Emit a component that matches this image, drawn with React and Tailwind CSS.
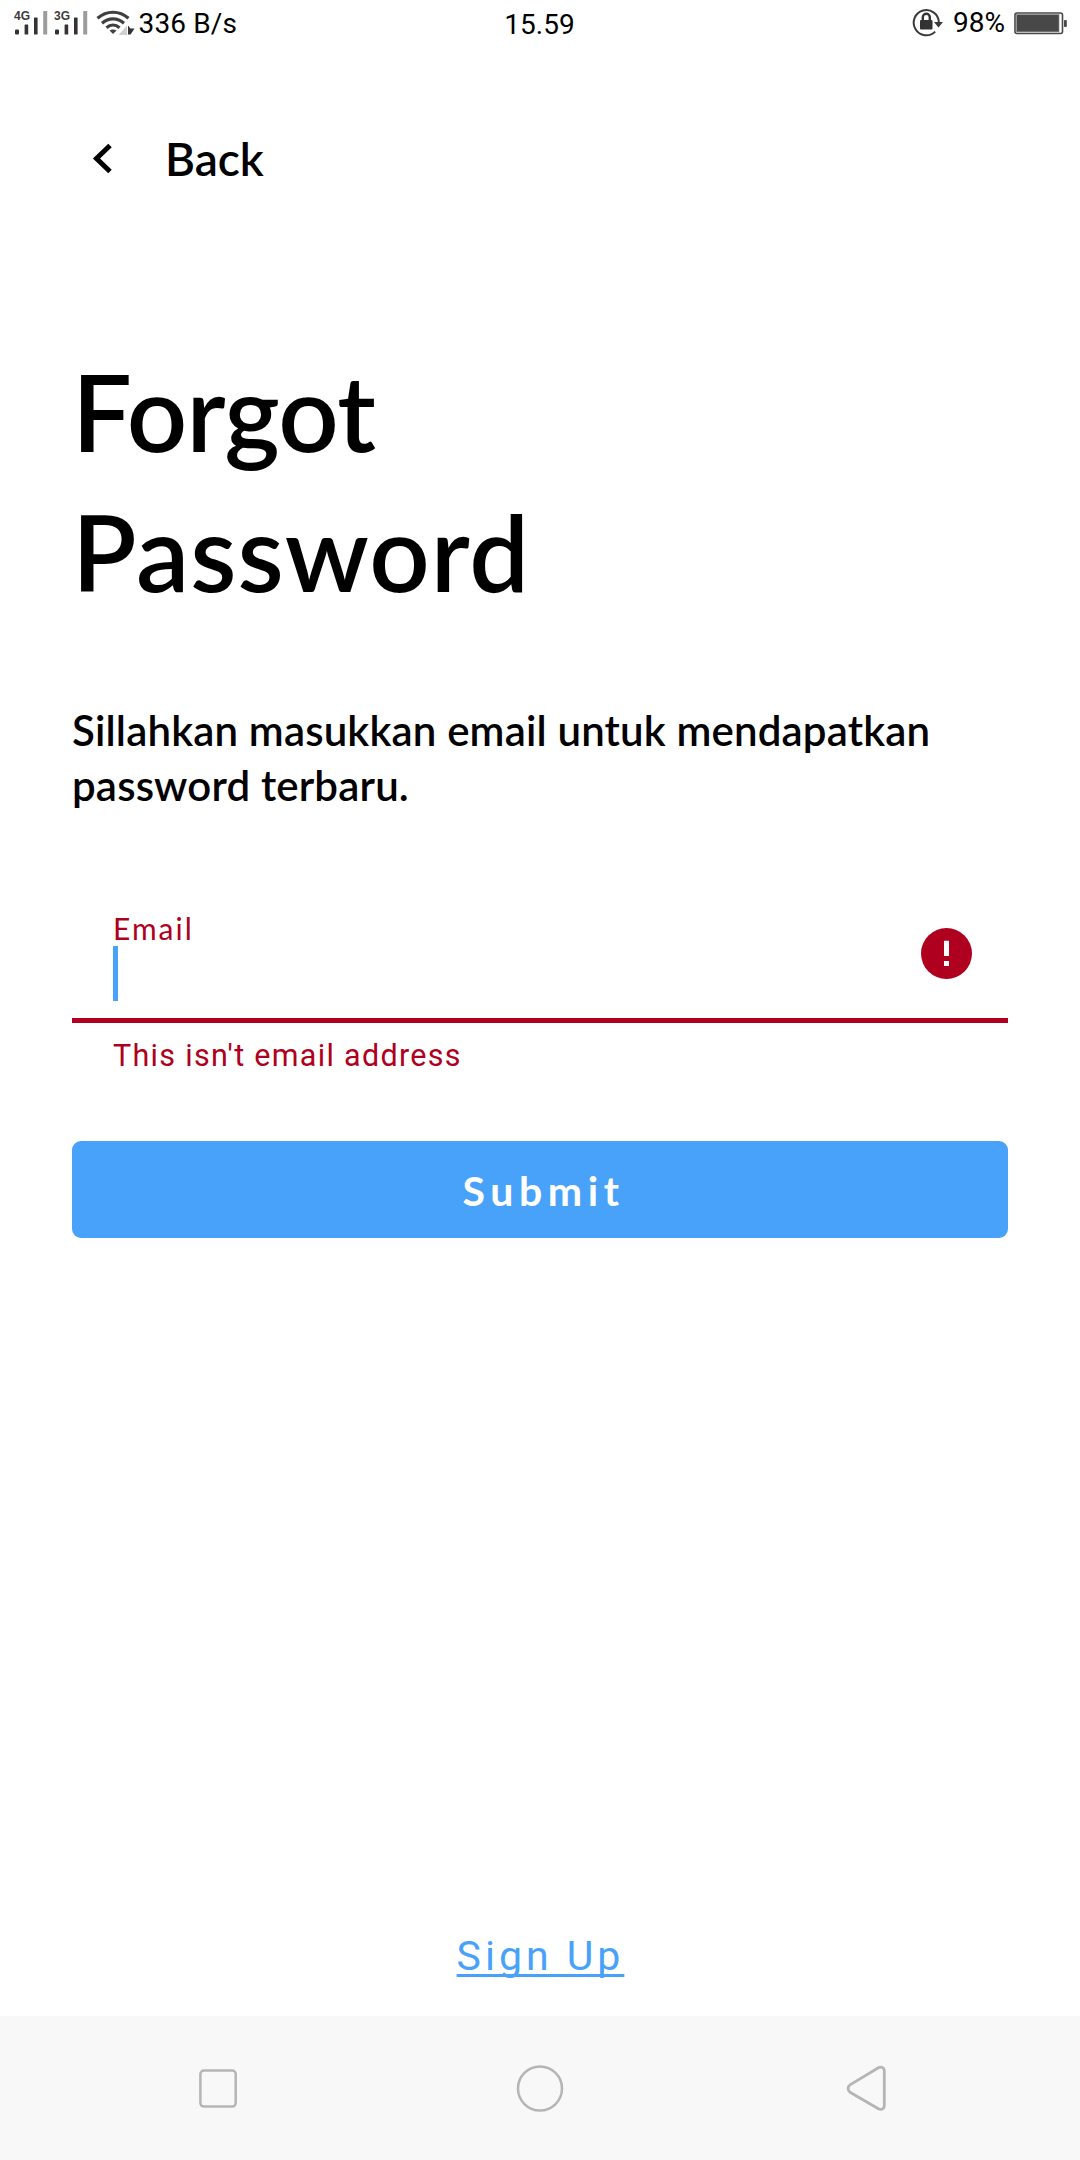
import React from "react";

function Signal({ label }) {
  return (
    <svg className="h-[26px] w-[36px] shrink-0" viewBox="0 0 36 26">
      <text x="0" y="9.5" fontFamily="Liberation Sans, sans-serif" fontSize="12" fontWeight="700" fill="#3b3b3b">{label}</text>
      <rect x="1" y="19.5" width="4" height="5" rx="1" fill="#333" />
      <rect x="10.6" y="14.5" width="3.6" height="10" rx="0.6" fill="#333" />
      <rect x="20" y="7.5" width="3.6" height="17" rx="0.6" fill="#333" />
      <rect x="29.2" y="1" width="4" height="23.5" rx="0.6" fill="#9c9c9c" />
    </svg>
  );
}

function Wifi() {
  return (
    <svg className="h-[26px] w-[40px] shrink-0" viewBox="0 0 40 26">
      <g fill="none" stroke="#404040" strokeWidth="3.2">
        <path d="M1.5 8.3C10.5 0.2 23.5 0.2 32.5 8.3" />
        <path d="M6 13.2C12.5 7.4 21.5 7.4 28 13.2" />
        <path d="M10.5 17.8C14.5 14.2 19.5 14.2 23.5 17.8" />
      </g>
      <path d="M13.5 20.5C15.5 19 18.5 19 20.5 20.5L17 24Z" fill="#404040" />
      <path d="M31 15.5V25H22.5Z" fill="#d0d0d0" />
      <path d="M32 15.5L34.5 18.5H38.5L34.5 24.5H32Z" fill="#333" />
    </svg>
  );
}

function RotationLock() {
  return (
    <svg className="h-[30px] w-[32px] shrink-0" viewBox="0 0 32 30">
      <path d="M23.2 23.6A12.6 12.6 0 1 1 26.9 14.5" fill="none" stroke="#3a3a3a" strokeWidth="2" />
      <path d="M22 14H31L26.5 19.5Z" fill="#3a3a3a" />
      <rect x="8" y="12" width="12.5" height="9.5" rx="1" fill="#333" />
      <path d="M10.8 12.5V9.2A3.5 3.5 0 0 1 17.8 9.2V12.5" fill="none" stroke="#333" strokeWidth="2.4" />
    </svg>
  );
}

function Battery() {
  return (
    <svg className="h-[23px] w-[54px] shrink-0" viewBox="0 0 54 23">
      <rect x="1" y="1" width="47.5" height="20.5" rx="2" fill="#fff" stroke="#484848" strokeWidth="1.6" />
      <rect x="2.6" y="2.6" width="42.4" height="17.3" fill="#484848" stroke="#8a8a8a" strokeWidth="0.7" />
      <rect x="50" y="8" width="2.8" height="7" rx="0.8" fill="#484848" />
    </svg>
  );
}

function StatusBar() {
  return (
    <div className="grid h-12 grid-cols-3 items-start font-[Roboto,sans-serif] text-[28px] leading-8 text-black">
      <div className="flex items-start pl-[14px]">
        <div className="mt-[10px] flex">
          <Signal label="4G" />
          <span className="w-[4px]" />
          <Signal label="3G" />
          <span className="w-[5.5px]" />
          <Wifi />
        </div>
        <span className="mt-[8px] ml-[3px] tracking-[0.15px] whitespace-nowrap">336 B/s</span>
      </div>
      <div className="mt-[9px] pr-px text-center">15.59</div>
      <div className="flex justify-end pr-[12px]">
        <div className="mt-[8px]"><RotationLock /></div>
        <span className="mt-[7px] mr-[9px] ml-[9px]">98%</span>
        <div className="mt-[12px]"><Battery /></div>
      </div>
    </div>
  );
}

function NavBar() {
  return (
    <nav className="flex h-36 items-center justify-between bg-[#f8f8f8] pr-[190px] pl-[194px]">
      <svg className="h-12 w-12" viewBox="0 0 48 48" fill="none" stroke="#b5b5b5" strokeWidth="2.5">
        <rect x="6.4" y="6.6" width="35.3" height="36" rx="3.5" />
      </svg>
      <svg className="h-12 w-12 overflow-visible" viewBox="0 0 48 48" fill="none" stroke="#b5b5b5" strokeWidth="2.5">
        <circle cx="22" cy="24.5" r="22" />
      </svg>
      <svg className="h-12 w-12" viewBox="0 0 48 48" fill="none" stroke="#b5b5b5" strokeWidth="2.8" strokeLinejoin="round">
        <path d="M36.4 3.7C39 2.2 42.3 3.5 42.3 7V41.5C42.3 45 39 46.2 36.4 44.8L8 28.2C5.5 26.6 5.5 22.5 8 20.9Z" />
      </svg>
    </nav>
  );
}

export default function App() {
  return (
    <div className="flex h-[2160px] w-[1080px] flex-col bg-white font-[Lato,sans-serif] text-black">
      <StatusBar />
      <header className="mt-[81px] flex h-[60px] items-center pl-[72px]">
        <svg className="ml-[20px] h-[34px] w-[22px]" viewBox="0 0 22 34">
          <path d="M18 3.5L4.5 16.5L18 29.5" fill="none" stroke="#000" strokeWidth="5" />
        </svg>
        <span className="ml-[51px] text-[46px] leading-[60px] font-semibold">Back</span>
      </header>
      <main className="flex flex-1 flex-col px-[72px]">
        <h1 className="mt-[152px] text-[106px] leading-[140px] font-semibold">
          <span className="block tracking-[-0.6px]">Forgot</span>
          <span className="block tracking-[1px]">Password</span>
        </h1>
        <p className="mt-[82px] text-[42px] leading-[55px] font-semibold tracking-[0.16px] whitespace-nowrap">
          Sillahkan masukkan email untuk mendapatkan<br />password terbaru.
        </p>
        <div className="mt-[87px] flex h-[123px] items-start justify-between border-b-[5px] border-[#b00020] pr-9 pl-[41px]">
          <div className="mt-[10px]">
            <div className="text-[30px] leading-9 tracking-[2px] text-[#b00020]">Email</div>
            <div className="h-[55px] w-[5px] bg-[#48a2fa]" />
          </div>
          <svg className="mt-[28px] h-[51px] w-[51px]" viewBox="0 0 51 51">
            <circle cx="25.5" cy="25.5" r="25.5" fill="#b00020" />
            <path d="M23 12.7h5v15.3h-5zM23 33h5v5h-5z" fill="#fff" />
          </svg>
        </div>
        <p className="mt-[13px] pl-[41px] font-[Roboto,sans-serif] text-[30.5px] leading-10 tracking-[1.3px] text-[#b00020]">This isn't email address</p>
        <button className="mt-[65px] h-[97px] rounded-[9px] bg-[#48a2fa] pt-[2px] pl-[7px] text-[41px] leading-none font-bold tracking-[5.6px] text-white">Submit</button>
        <a className="mt-auto mb-[34px] self-center font-[Roboto,sans-serif] text-[41px] leading-[52px] text-[#48a2fa] underline decoration-[3px] underline-offset-[4px] [text-decoration-skip-ink:none] tracking-[4px] indent-[1px]">Sign Up</a>
      </main>
      <NavBar />
    </div>
  );
}
